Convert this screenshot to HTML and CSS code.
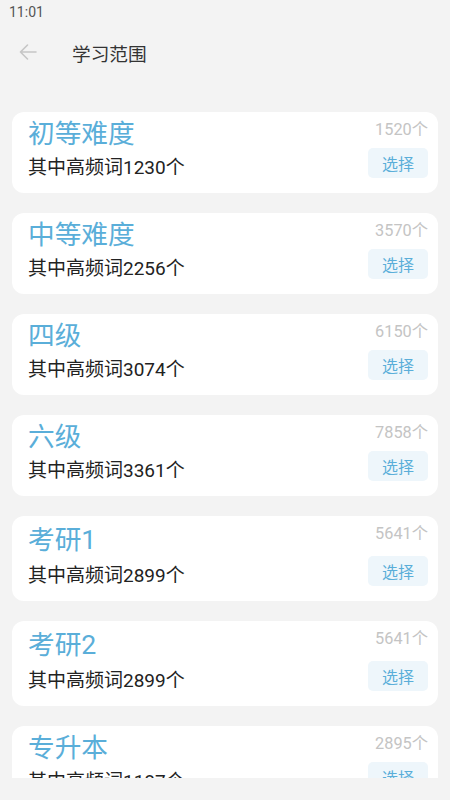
FILE: index.html
```html
<!DOCTYPE html>
<html lang="zh-CN">
<head>
  <meta charset="UTF-8">
  <title>学习范围</title>
  <link rel="stylesheet" href="styles.css">
</head>
<body>

  <div class="status-bar">11:01</div>

  <header class="top-bar">
    <svg class="back" width="18" height="16" viewBox="0 0 18 16">
      <path d="M17 8H1.5M8.5 1L1.5 8l7 7" fill="none" stroke="#c6c6c6" stroke-width="1.6" stroke-linecap="round" stroke-linejoin="round"/>
    </svg>
    <h1>学习范围</h1>
  </header>

  <div class="list">
    <div class="card">
      <div class="info">
        <div class="name">初等难度</div>
        <div class="sub">其中高频词1230个</div>
      </div>
      <div class="side">
        <div class="count">1520个</div>
        <button>选择</button>
      </div>
    </div>

    <div class="card">
      <div class="info">
        <div class="name">中等难度</div>
        <div class="sub">其中高频词2256个</div>
      </div>
      <div class="side">
        <div class="count">3570个</div>
        <button>选择</button>
      </div>
    </div>

    <div class="card">
      <div class="info">
        <div class="name">四级</div>
        <div class="sub">其中高频词3074个</div>
      </div>
      <div class="side">
        <div class="count">6150个</div>
        <button>选择</button>
      </div>
    </div>

    <div class="card">
      <div class="info">
        <div class="name">六级</div>
        <div class="sub">其中高频词3361个</div>
      </div>
      <div class="side">
        <div class="count">7858个</div>
        <button>选择</button>
      </div>
    </div>

    <div class="card">
      <div class="info">
        <div class="name tall">考研1</div>
        <div class="sub">其中高频词2899个</div>
      </div>
      <div class="side">
        <div class="count">5641个</div>
        <button>选择</button>
      </div>
    </div>

    <div class="card">
      <div class="info">
        <div class="name tall">考研2</div>
        <div class="sub">其中高频词2899个</div>
      </div>
      <div class="side">
        <div class="count">5641个</div>
        <button>选择</button>
      </div>
    </div>

    <div class="card">
      <div class="info">
        <div class="name">专升本</div>
        <div class="sub">其中高频词1187个</div>
      </div>
      <div class="side">
        <div class="count">2895个</div>
        <button>选择</button>
      </div>
    </div>
  </div>

</body>
</html>
```

FILE: styles.css
```css
body {
  font-family: Roboto, "Noto Sans CJK SC", sans-serif;
  background: #f3f3f3;
  margin: 0;
  padding: 0;
  height: 800px;
  overflow: hidden;
}
.status-bar {
  height: 24px;
  line-height: 24px;
  padding-left: 9px;
  font-size: 14px;
  color: #555;
}
.top-bar {
  height: 56px;
  display: flex;
  align-items: center;
}
.back {
  margin-left: 19px;
}
h1 {
  margin: 0 0 0 35px;
  font-size: 18.7px;
  font-weight: normal;
  color: #333;
}
.list {
  height: 666px;
  padding: 32px 0 0;
  overflow: hidden;
}
.card {
  display: flex;
  justify-content: space-between;
  margin: 0 12px 20px;
  padding: 3px 10px 10px 16px;
  background: #fff;
  border-radius: 12px;
}
.name {
  font-size: 26.7px;
  line-height: 38px;
  color: #5aaed9;
}
.name.tall {
  line-height: 42px;
}
.sub {
  font-size: 19px;
  line-height: 30px;
  color: #222;
}
.side {
  display: flex;
  flex-direction: column;
  justify-content: space-between;
  align-items: flex-end;
}
.count {
  margin-top: 4px;
  font-size: 16.3px;
  line-height: 22px;
  color: #c4c4c4;
}
button {
  width: 60px;
  height: 30px;
  margin-bottom: 5px;
  padding: 0;
  border: none;
  border-radius: 5px;
  background: #eef6fb;
  color: #5aaed9;
  font-family: inherit;
  font-size: 16px;
}
```
